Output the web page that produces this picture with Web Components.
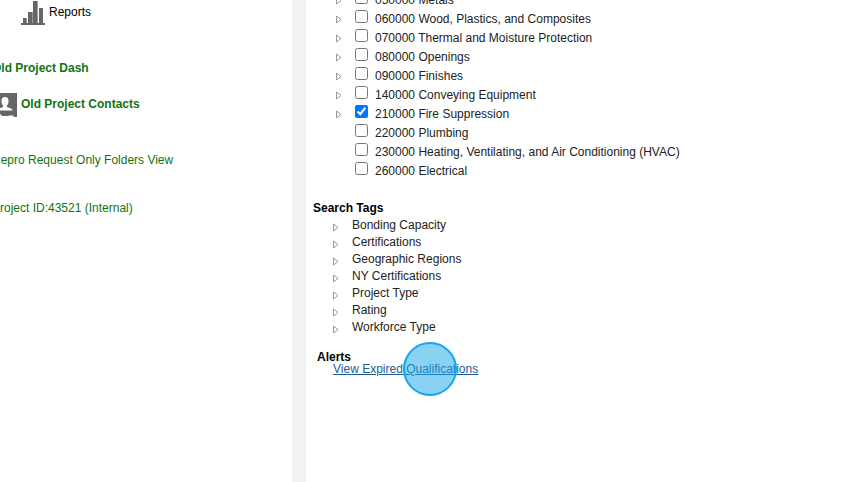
<!DOCTYPE html>
<html lang="en">
<head>
<meta charset="utf-8">
<title>Project Qualifications</title>
<style>
  html, body { margin: 0; height: 100%; }
  body { background: #fff; color: #222; font: 12px/17px "Liberation Sans", Arial, sans-serif; overflow: hidden; }
</style>
</head>
<body>
<app-shell>
  <project-nav slot="nav">
    <nav-item variant="reports"><svg slot="icon" width="24" height="26" viewBox="0 0 24 26" aria-hidden="true"><path fill="#666" d="M0 23h24v2H0zM2 18h4v5H2zM7 12h5v11H7zM12 1h5v22h-5zM18 8h4v15h-4z"/><path fill="#999" d="M11 12h1v11h-1zM5 18h1v5H5zM16 1h1v22h-1z"/></svg>Reports</nav-item>
    <nav-item variant="dash">Old Project Dash</nav-item>
    <nav-item variant="contacts"><svg slot="icon" width="25" height="24" viewBox="0 0 25 24" aria-hidden="true"><path fill="#666" d="M0 0h25v24h-3l-1-1.500h-4L16 23h-6l-1-1.500H5L4 24H0z"/><path fill="#fff" d="M13 4c2.500 0 3.500 1.500 3.500 4 0 2-.5 3.500-1.500 4.500V14l4 1.500q1.500.5 1.500 2H5.500q0-1.500 1.500-2l4-1.500v-1.500C10 11.500 9.500 10 9.500 8c0-2.500 1-4 3.500-4z"/></svg>Old Project Contacts</nav-item>
    <nav-item variant="folders">Repro Request Only Folders View</nav-item>
    <nav-item variant="project">Project ID:43521 (Internal)</nav-item>
  </project-nav>
  <code-list>
    <code-row expandable>050000 Metals</code-row>
    <code-row expandable>060000 Wood, Plastics, and Composites</code-row>
    <code-row expandable>070000 Thermal and Moisture Protection</code-row>
    <code-row expandable>080000 Openings</code-row>
    <code-row expandable>090000 Finishes</code-row>
    <code-row expandable>140000 Conveying Equipment</code-row>
    <code-row expandable checked>210000 Fire Suppression</code-row>
    <code-row>220000 Plumbing</code-row>
    <code-row>230000 Heating, Ventilating, and Air Conditioning (HVAC)</code-row>
    <code-row>260000 Electrical</code-row>
  </code-list>
  <tag-list>
    <span slot="title">Search Tags</span>
    <tag-row>Bonding Capacity</tag-row>
    <tag-row>Certifications</tag-row>
    <tag-row>Geographic Regions</tag-row>
    <tag-row>NY Certifications</tag-row>
    <tag-row>Project Type</tag-row>
    <tag-row>Rating</tag-row>
    <tag-row>Workforce Type</tag-row>
  </tag-list>
  <alert-panel><span slot="title">Alerts</span>View Expired Qualifications</alert-panel>
</app-shell>
<script>
  const define = (name, render) => customElements.define(name, class extends HTMLElement {
    constructor() {
      super();
      this.attachShadow({ mode: 'open' });
    }
    connectedCallback() {
      const t = document.createElement('template');
      t.innerHTML = render(this);
      this.shadowRoot.replaceChildren(t.content.cloneNode(true));
    }
  });

  define('app-shell', () => `
    <style>
      :host { display: flex; min-height: 100vh; overflow: hidden; }
      aside { flex: 0 0 292px; min-width: 0; border-right: 14px solid #f3f3f3; overflow: hidden; }
      main { flex: 1; min-width: 0; padding-left: 7px; }
    </style>
    <aside><slot name="nav"></slot></aside>
    <main><slot></slot></main>`);

  define('project-nav', () => `
    <style>
      :host { display: block; margin-left: -8px; }
      nav { display: flex; flex-direction: column; align-items: flex-start; }
    </style>
    <nav><slot></slot></nav>`);

  define('nav-item', () => `
    <style>
      :host { display: block; color: #137313; white-space: nowrap; }
      a { display: flex; align-items: center; gap: 4px; color: inherit; text-decoration: none; }
      :host([variant="reports"]) { color: #000; padding-left: 29px; }
      :host([variant="dash"]) { font-weight: bold; margin-top: 34px; }
      :host([variant="contacts"]) { font-weight: bold; margin-top: 16px; }
      :host([variant="reports"]) span, :host([variant="contacts"]) span { padding-bottom: 2px; }
      :host([variant="folders"]) { margin-top: 35px; }
      :host([variant="project"]) { margin-top: 31px; }
    </style>
    <a href="#"><slot name="icon"></slot><span><slot></slot></span></a>`);

  define('disclosure-arrow', () => `
    <style>
      :host { display: block; }
      button { display: block; width: 6px; height: 9px; padding: 0; border: 0; background: none; }
      svg { display: block; }
    </style>
    <button type="button" aria-label="Expand"><svg width="6" height="9" viewBox="0 0 6 9"><path d="M.5 1v7L5 4.500z" fill="#fff" stroke="#999"/></svg></button>`);

  define('code-list', () => `
    <style>:host { display: block; margin-top: -9px; }</style>
    <slot></slot>`);

  define('code-row', el => `
    <style>
      :host { display: grid; grid-template-columns: 19px 1fr; align-items: center; padding-left: 23px; line-height: 19px; }
      label { grid-column: 2; display: flex; align-items: flex-start; gap: 7px; }
      input { flex: none; width: 13px; height: 13px; margin: 0; }
    </style>
    ${el.hasAttribute('expandable') ? '<disclosure-arrow></disclosure-arrow>' : ''}
    <label><input type="checkbox" ${el.hasAttribute('checked') ? 'checked' : ''}><span><slot></slot></span></label>`);

  define('tag-list', () => `
    <style>
      :host { display: block; margin-top: 19px; }
      h2 { margin: 0; font-size: 12px; line-height: 17px; color: #000; }
    </style>
    <h2><slot name="title"></slot></h2>
    <slot></slot>`);

  define('tag-row', () => `
    <style>
      :host { display: grid; grid-template-columns: 19px 1fr; align-items: end; padding-left: 20px; }
      disclosure-arrow { padding-bottom: 2px; }
    </style>
    <disclosure-arrow></disclosure-arrow>
    <span><slot></slot></span>`);

  define('alert-panel', () => `
    <style>
      :host { display: block; margin-top: 15px; padding-left: 4px; line-height: 12px; }
      h2 { margin: 0; font-size: 12px; color: #000; }
      div { position: relative; width: fit-content; margin-left: 16px; }
      a { color: #1c5c94; }
      i { position: absolute; top: 50%; right: 21px; width: 50px; height: 50px; margin-top: -27px; border: 2px solid #14a5eb; border-radius: 50%; background: rgba(20, 165, 232, .5); pointer-events: none; }
    </style>
    <h2><slot name="title"></slot></h2>
    <div><a href="#"><slot></slot></a><i></i></div>`);
</script>
</body>
</html>
